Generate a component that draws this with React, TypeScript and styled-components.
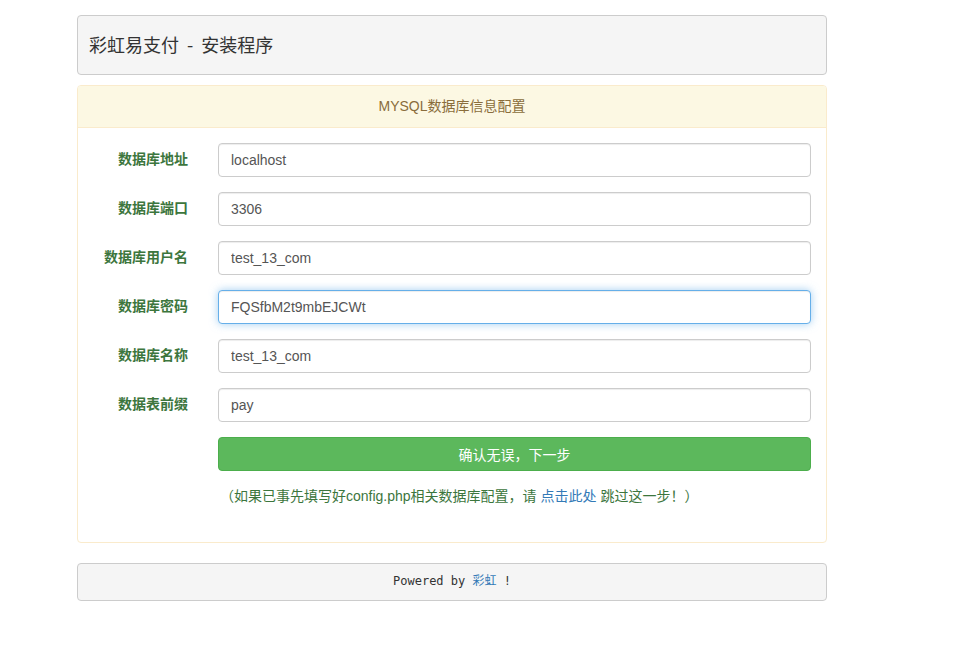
import styled, { createGlobalStyle } from "styled-components";

const GlobalStyle = createGlobalStyle`
    html, body {
        margin: 0;
        padding: 0;
        background: #fff;
    }
    body {
        font-family: "Liberation Sans", Arial, "Noto Sans CJK SC", sans-serif;
        font-size: 14px;
        line-height: 1.42857;
        color: #333;
    }
`;

const Page = styled.div`
    width: 750px;
    margin-left: 77px;
    padding-top: 15px;
`;

const TopBar = styled.div`
    height: 58px;
    display: flex;
    align-items: center;
    padding: 0 11px;
    background: #f5f5f5;
    border: 1px solid #ccc;
    border-radius: 4px;
    margin-bottom: 10px;
`;

const Title = styled.h3`
    margin: 0;
    font-size: 18px;
    font-weight: normal;
    color: #333;
    font-family: "Noto Sans CJK SC", "Liberation Serif", serif;
`;

const Panel = styled.div`
    border: 1px solid #faebcc;
    border-radius: 4px;
    background: #fff;
    margin-bottom: 20px;
`;

const PanelHeading = styled.div`
    height: 41px;
    display: flex;
    align-items: center;
    justify-content: center;
    background: #fcf8e3;
    color: #8a6d3b;
    border-bottom: 1px solid #faebcc;
    border-radius: 3px 3px 0 0;
`;

const PanelBody = styled.div`
    padding: 15px 15px 20px;
`;

const Row = styled.div`
    display: flex;
    align-items: center;
    margin-bottom: 15px;
`;

const Label = styled.label`
    width: 110px;
    padding-right: 15px;
    box-sizing: border-box;
    text-align: right;
    font-weight: bold;
    color: #3c763d;
    flex-shrink: 0;
`;

const Field = styled.div`
    flex: 1;
    padding-left: 15px;
`;

const Input = styled.input<{ $focus?: boolean }>`
    display: block;
    width: 100%;
    height: 34px;
    box-sizing: border-box;
    padding: 6px 12px;
    font-size: 14px;
    font-family: inherit;
    color: #555;
    background: #fff;
    border: 1px solid ${({ $focus }) => ($focus ? "#66afe9" : "#ccc")};
    border-radius: 4px;
    outline: none;
    box-shadow: ${({ $focus }) =>
        $focus
            ? "inset 0 1px 1px rgba(0,0,0,.075), 0 0 8px rgba(102,175,233,.6)"
            : "inset 0 1px 1px rgba(0,0,0,.075)"};
`;

const SubmitButton = styled.button`
    display: block;
    width: 100%;
    height: 34px;
    font-size: 14px;
    font-family: inherit;
    color: #fff;
    background: #5cb85c;
    border: 1px solid #4cae4c;
    border-radius: 4px;
    cursor: pointer;
`;

const Help = styled.p`
    margin: 16px 0 0;
    padding-left: 2px;
    color: #3c763d;
    a {
        color: #337ab7;
        text-decoration: none;
    }
`;

const Footer = styled.div`
    height: 36px;
    display: flex;
    align-items: center;
    justify-content: center;
    background: #f5f5f5;
    border: 1px solid #ccc;
    border-radius: 4px;
    font-family: "DejaVu Sans Mono", "Liberation Mono", "Noto Sans CJK SC", monospace;
    font-size: 12px;
    color: #333;
    a {
        color: #337ab7;
        text-decoration: none;
    }
`;

const fields = [
    { label: "数据库地址", value: "localhost" },
    { label: "数据库端口", value: "3306" },
    { label: "数据库用户名", value: "test_13_com" },
    { label: "数据库密码", value: "FQSfbM2t9mbEJCWt", focus: true },
    { label: "数据库名称", value: "test_13_com" },
    { label: "数据表前缀", value: "pay" },
];

const App = () => (
    <>
        <GlobalStyle />
        <Page>
            <TopBar>
                <Title>彩虹易支付 &nbsp;-&nbsp; 安装程序</Title>
            </TopBar>
            <Panel>
                <PanelHeading>MYSQL数据库信息配置</PanelHeading>
                <PanelBody>
                    {fields.map((f) => (
                        <Row key={f.label}>
                            <Label>{f.label}</Label>
                            <Field>
                                <Input defaultValue={f.value} $focus={f.focus} />
                            </Field>
                        </Row>
                    ))}
                    <Row>
                        <Label />
                        <Field>
                            <SubmitButton>确认无误，下一步</SubmitButton>
                            <Help>
                                （如果已事先填写好config.php相关数据库配置，请 <a href="#">点击此处</a> 跳过这一步！）
                            </Help>
                        </Field>
                    </Row>
                </PanelBody>
            </Panel>
            <Footer>
                <span>
                    Powered by <a href="#">彩虹</a> !
                </span>
            </Footer>
        </Page>
    </>
);

export default App;
